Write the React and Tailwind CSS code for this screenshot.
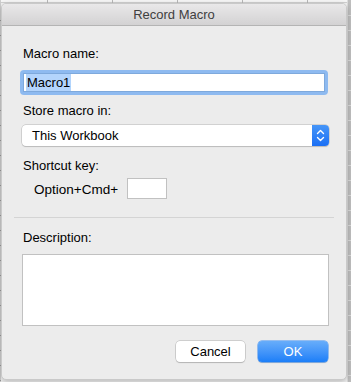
export default function App() {
    const cols = [48, 113, 178, 243, 308];
    const rows = Array.from({ length: 26 }, (_, i) => 15 + i * 15);

    return (
        <div className="relative w-[351px] h-[382px] overflow-hidden bg-[#f4f4f4]" style={{ fontFamily: '"Liberation Sans", Arial, sans-serif' }}>
            {/* Spreadsheet behind the dialog */}
            <svg className="absolute inset-0" width="351" height="382">
                <rect x="0" y="0" width="351" height="3" fill="#f7f7f7" />
                <line x1="0" y1="2.5" x2="351" y2="2.5" stroke="#d2d2d2" />
                {cols.map((x) => (
                    <line key={x} x1={x - 0.5} y1="0" x2={x - 0.5} y2="3" stroke="#b8b8b8" />
                ))}
                <rect x="0" y="0" width="1" height="382" fill="#cfcfcf" />
                <rect x="347" y="0" width="1" height="382" fill="#dedede" />
                <rect x="348" y="0" width="3" height="382" fill="#bfbfbf" />
                {rows.map((y) => (
                    <g key={y}>
                        <line x1="348" y1={y + 0.5} x2="351" y2={y + 0.5} stroke="#dadada" />
                        <line x1="0" y1={y + 5.5} x2="1" y2={y + 5.5} stroke="#9a9a9a" />
                    </g>
                ))}
            </svg>

            {/* Dialog window */}
            <div className="absolute left-[1px] top-[3px] w-[346px] h-[377px] flex flex-col rounded-[5px] border border-[#c9c9c9] bg-[#ececec] overflow-hidden shadow-[0_2px_6px_rgba(0,0,0,0.25)]">
                <div className="h-[22px] shrink-0 flex items-center justify-center bg-gradient-to-b from-[#e9e8e9] to-[#d3d2d3] border-b border-[#b4b4b4] text-[13px] text-[#404040]">
                    Record Macro
                </div>

                <div className="flex flex-col px-[20px] pt-[20px] text-[13px] leading-[16px] text-black">
                    <div className="pl-[1px]">Macro name:</div>
                    <div className="mt-[8px] -mx-[2px] h-[25px] rounded-[4px] bg-[#8ebaf0] p-[3px]">
                        <div className="h-full bg-white border border-[#7ea9dc] flex items-center px-[2px]">
                            <span className="bg-[#b3d4fc] text-black leading-[17px] px-[1px]">Macro1</span>
                        </div>
                    </div>

                    <div className="mt-[8px] pl-[1px]">Store macro in:</div>
                    <div className="mt-[6px] w-[307px] h-[21px] flex rounded-[4px] bg-white shadow-[0_0_0_0.5px_#b5b5b5,0_1px_1px_rgba(0,0,0,0.18)] overflow-hidden">
                        <div className="flex-1 flex items-center pl-[10px] text-black">This Workbook</div>
                        <div className="w-[17px] flex items-center justify-center bg-gradient-to-b from-[#4595f8] to-[#1b6ff4]">
                            <svg width="9" height="13" viewBox="0 0 9 13" fill="none" stroke="white" strokeWidth="1.4" strokeLinecap="round" strokeLinejoin="round">
                                <path d="M1.5 4.5 L4.5 1.5 L7.5 4.5" />
                                <path d="M1.5 8.5 L4.5 11.5 L7.5 8.5" />
                            </svg>
                        </div>
                    </div>

                    <div className="mt-[12px] pl-[1px]">Shortcut key:</div>
                    <div className="mt-[4px] flex items-center pl-[12px]">
                        <span className="text-[13.5px] mt-[2px]">Option+Cmd+</span>
                        <div className="ml-[9px] w-[40px] h-[21px] bg-white border border-[#c1c1c1]" />
                    </div>
                </div>

                <div className="mt-[18px] mx-[12px] h-px bg-[#d4d4d4]" />

                <div className="flex flex-col px-[20px] pt-[12px] text-[13px] leading-[16px] text-black">
                    <div className="pl-[1px]">Description:</div>
                    <div className="mt-[8px] w-[307px] h-[72px] bg-white border border-[#c1c1c1]" />

                    <div className="mt-[15px] -mr-[2px] flex justify-end gap-[13px]">
                        <button className="w-[69px] h-[21px] rounded-[4px] bg-white text-black shadow-[0_0_0_0.5px_#b0b0b0,0_1px_1px_rgba(0,0,0,0.2)]">
                            Cancel
                        </button>
                        <button className="w-[70px] h-[21px] rounded-[4px] bg-gradient-to-b from-[#67adfa] to-[#1a7ef8] text-white shadow-[0_0_0_0.5px_#3d8ef3,0_1px_1px_rgba(0,0,0,0.2)]">
                            OK
                        </button>
                    </div>
                </div>
            </div>
        </div>
    );
}
